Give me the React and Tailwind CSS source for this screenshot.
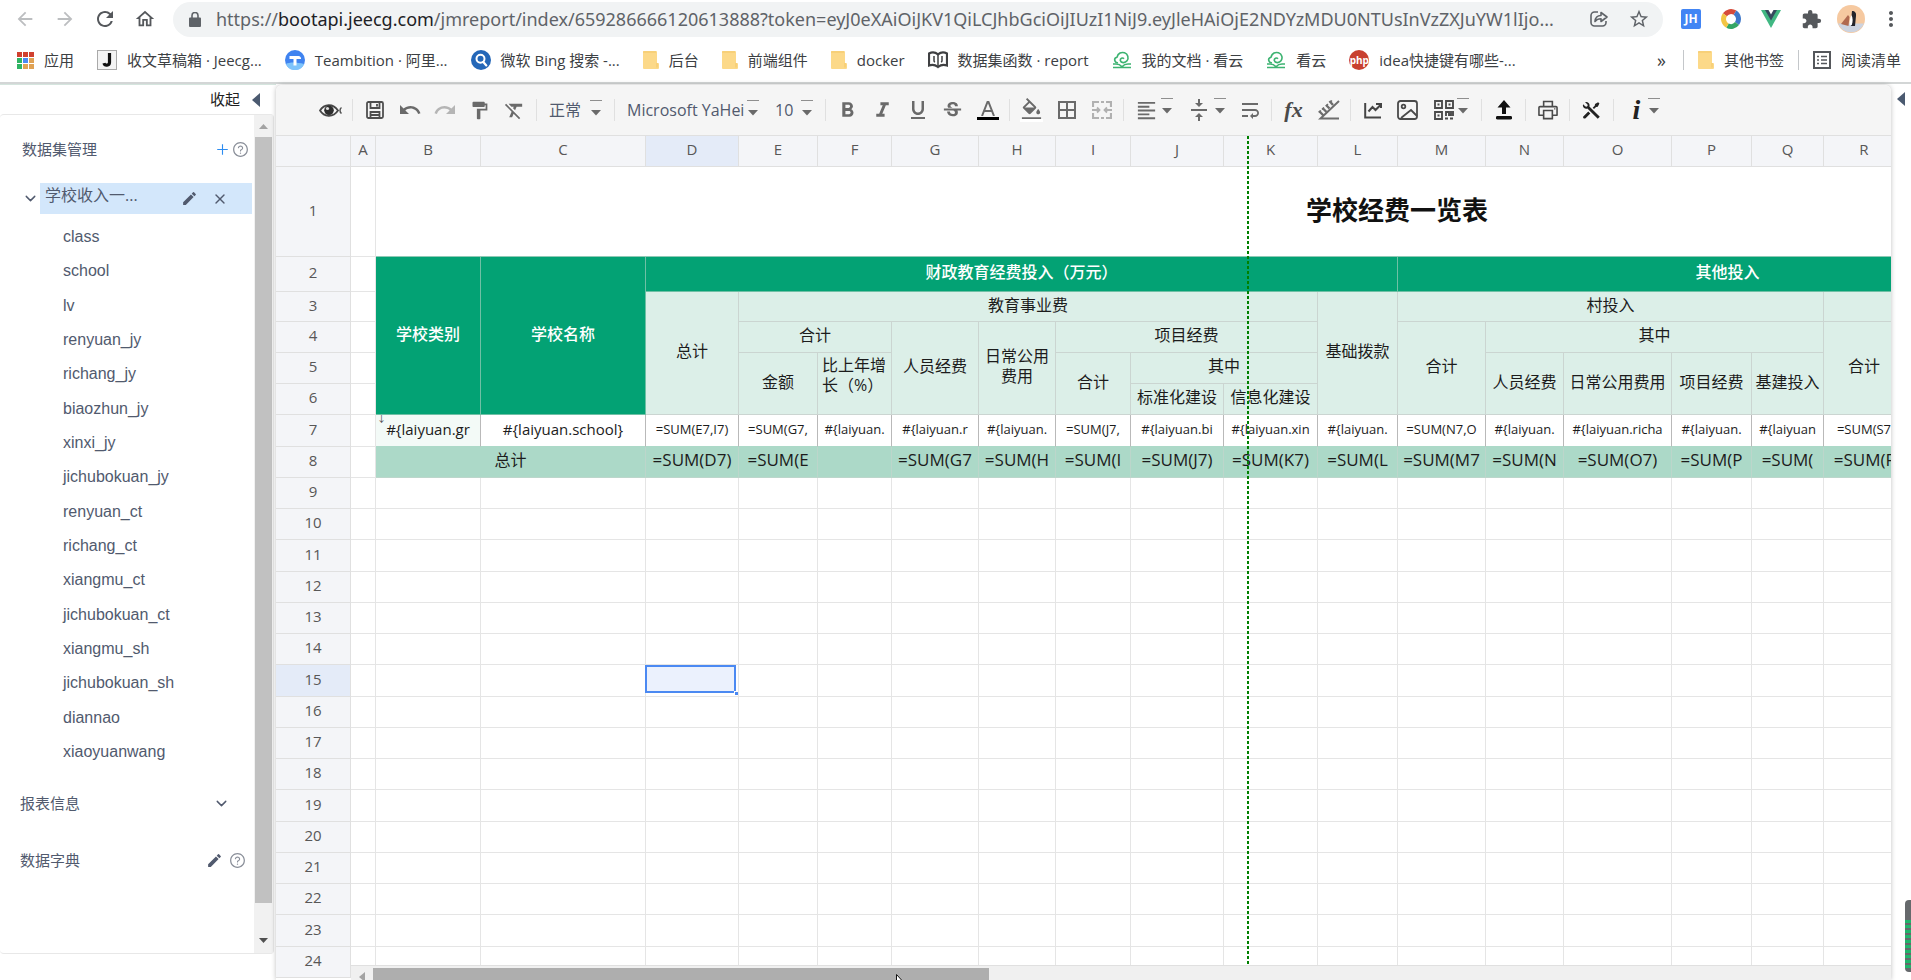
import { clsx } from 'clsx';
import { LuChevronDown, LuX } from 'react-icons/lu';
import {
  MdArrowBack, MdArrowForward, MdRefresh, MdOutlineHome, MdStarBorder, MdExtension, MdMoreVert, MdEdit,
  MdFormatBold, MdFormatItalic, MdFormatUnderlined, MdStrikethroughS, MdFormatColorFill, MdBorderAll,
  MdUndo, MdRedo, MdFormatPaint, MdFormatClear, MdFormatAlignLeft, MdVerticalAlignCenter, MdWrapText,
} from 'react-icons/md';
import { AiOutlineQuestionCircle, AiOutlinePlus, AiOutlinePrinter } from 'react-icons/ai';
import { RiToolsFill } from 'react-icons/ri';

/* ---------- small drawings ---------- */

const AppsIcon = () => (
  <svg viewBox="0 0 17 17" className="w-[17px] h-[17px]">
    {['#d0402f', '#d0402f', '#d0402f', '#2fb463', '#4a8af4', '#e0a254', '#2fb463', '#e0a254', '#e0a254'].map((c, i) => (
      <rect key={i} x={(i % 3) * 6} y={Math.floor(i / 3) * 6} width="5" height="5" fill={c} />
    ))}
  </svg>
);

const JIcon = () => (
  <svg viewBox="0 0 20 20" className="w-5 h-5">
    <rect x="0.5" y="0.5" width="19" height="19" fill="#f4f4f4" stroke="#a9a9a9" />
    <path d="M12.5 3v9.5a2.8 2.8 0 0 1-5.5.6" fill="none" stroke="#111" strokeWidth="3.2" />
  </svg>
);

const TeamIcon = () => (
  <svg viewBox="0 0 20 20" className="w-5 h-5">
    <circle cx="10" cy="10" r="10" fill="#3f83f0" />
    <path d="M0.800 14c4-2 10-2 18.400 0a10 10 0 0 1-18.400 0z" fill="#7fc4fb" />
    <path d="M4.500 6h9a2.500 2.500 0 0 1 2.500 3h-4.500v6.500h-3V9h-4z" fill="#fff" />
  </svg>
);

const BingIcon = () => (
  <svg viewBox="0 0 20 20" className="w-5 h-5">
    <circle cx="10" cy="10" r="10" fill="#2467b8" />
    <circle cx="9.500" cy="8.800" r="4" fill="none" stroke="#fff" strokeWidth="2" />
    <path d="M12.300 12l3 3.400" stroke="#fff" strokeWidth="2.200" strokeLinecap="round" />
  </svg>
);

const FolderIcon = () => (
  <svg viewBox="0 0 16 18" className="w-4 h-[18px]">
    <path d="M1 0h12a1 1 0 0 1 1 1v11h1a1 1 0 0 1 1 1v4a1 1 0 0 1-1 1H1a1 1 0 0 1-1-1V1a1 1 0 0 1 1-1z" fill="#fcd989" />
    <path d="M14 12v4.500M0 1h13" stroke="#f3c768" fill="none" />
  </svg>
);

const BookIcon = () => (
  <svg viewBox="0 0 20 18" className="w-5 h-[18px]" fill="none" stroke="#3f4042" strokeWidth="2.200">
    <path d="M1 2.500c3-1.500 6-1.500 9 .8 3-2.300 6-2.300 9-.8v12c-3-1.200-6-1-9 1.500-3-2.500-6-2.700-9-1.500z" />
    <path d="M10 4v11M6 5v4.500a1.500 1.500 0 0 0 1 1.500M14 5v4.500a1.500 1.500 0 0 1-1 1.500" strokeWidth="1.500" />
  </svg>
);

const CloudIcon = () => (
  <svg viewBox="0 0 20 18" className="w-5 h-[18px]" fill="none" stroke="#3cb371" strokeWidth="1.600">
    <path d="M6 12C2 11.500 1.500 7 5 6.200 6 2 9.500.8 12.500 1.800c3.500 1.200 4.500 5.200 2.500 8C13 12.500 9 12 8.300 9.500 8 7.500 10.500 6 12 7.800" />
    <path d="M1 13h3c3 0 4.500 1 6 2.700C11.500 14 13 13 16 13h3M1 16.500h18" />
  </svg>
);

const PhpIcon = () => (
  <span className="flex w-5 h-5 items-center justify-center rounded-full bg-[#c8402f] text-[10px] leading-5 font-bold text-white">
    php
  </span>
);

const ListIcon = () => (
  <svg viewBox="0 0 18 18" className="w-[18px] h-[18px]" fill="none" stroke="#55585c" strokeWidth="2">
    <rect x="1" y="1" width="16" height="16" />
    <path d="M4 5.500h2M8 5.500h6M4 9h2M8 9h6M4 12.500h2M8 12.500h6" strokeWidth="1.600" />
  </svg>
);

const LockIcon = () => (
  <svg viewBox="0 0 12 15" className="w-3 h-[15px] shrink-0" fill="#5f6368">
    <path d="M1 5.500h10a1 1 0 0 1 1 1V14a1 1 0 0 1-1 1H1a1 1 0 0 1-1-1V6.500a1 1 0 0 1 1-1z" />
    <path d="M3 6V3.500a3 3 0 0 1 6 0V6" fill="none" stroke="#5f6368" strokeWidth="1.600" />
  </svg>
);

const ShareIcon = () => (
  <svg viewBox="0 0 20 18" className="w-5 h-[18px]" fill="none" stroke="#5f6368" strokeWidth="1.600">
    <path d="M9 2H5.500A3.500 3.500 0 0 0 2 5.500v7A3.500 3.500 0 0 0 5.500 16h8a3.500 3.500 0 0 0 3.500-3.500V11" />
    <path d="M6 11.500c.3-4 2.500-6 6-6V2.500L18 7l-6 4.500V8.800c-2.500 0-4.500.8-6 2.700z" strokeLinejoin="round" />
  </svg>
);

const RingIcon = () => (
  <svg viewBox="0 0 20 20" className="w-5 h-5" fill="none" strokeWidth="5">
    <path d="M3.900 5.700A7.500 7.500 0 0 1 14 3.700" stroke="#d64b3a" />
    <path d="M14 3.700a7.500 7.500 0 0 1 2 10.800" stroke="#3f78c9" />
    <path d="M16 14.500a7.500 7.500 0 0 1-9.500 2.100" stroke="#33a566" />
    <path d="M6.500 16.600A7.500 7.500 0 0 1 3.900 5.700" stroke="#f2c544" />
  </svg>
);

const VueIcon = () => (
  <svg viewBox="0 0 20 18" className="w-5 h-[18px]">
    <path d="M0 0h20L10 18z" fill="#41b883" />
    <path d="M4 0h12l-6 10.500z" fill="#35495e" />
    <path d="M7.500 0h5L10 4.500z" fill="#fff" />
  </svg>
);

const Avatar = () => (
  <svg viewBox="0 0 28 28" className="w-7 h-7">
    <circle cx="14" cy="14" r="14" fill="#f6c9a0" />
    <path d="M1 18.500a14 14 0 0 0 26 0z" fill="#ccd3e0" />
    <path d="M4 19l7-9 1.500 2-1 9z" fill="#b0694f" />
    <path d="M15 6c3 0 4.500 2 4 5l-1 10h-4c1.500-3 1-7 .5-10z" fill="#23242b" />
    <path d="M14.500 10c1.500 3 1.500 7 .2 10h-2c-.3-4 .3-7 1.800-10z" fill="#fff" />
  </svg>
);

const EyeIcon = () => (
  <svg viewBox="0 0 23 15" className="w-[23px] h-[15px]">
    <path d="M1 7.500C5 1 14 0 19 7.500 14 15 5 14 1 7.500z" fill="none" stroke="#474747" strokeWidth="1.800" />
    <circle cx="10" cy="7.300" r="4.800" fill="#2e2e2e" />
    <circle cx="8.500" cy="5.500" r="1.600" fill="#ddd" />
    <path d="M22.500 4.500c-2 1.500-2 4.500 0 6" fill="none" stroke="#555" strokeWidth="1.500" />
  </svg>
);

const SaveIcon = () => (
  <svg viewBox="0 0 18 18" className="w-[18px] h-[18px]" fill="none" stroke="#4f4f4f" strokeWidth="1.800">
    <rect x="1" y="1" width="16" height="16" rx="1.500" />
    <path d="M4.500 1v6h9V1M4.500 17v-6h9v6M11 3v2.500M5 14h8" />
  </svg>
);

const MergeIcon = () => (
  <svg viewBox="0 0 20 18" className="w-5 h-[18px]" fill="none" stroke="#b1b1b1" strokeWidth="2.200">
    <path d="M1 6V1h6M9 1h3M14 1h5v5M1 12v5h6M9 17h3M14 17h5v-5" />
    <path d="M0 9h7M13 9h7M5 6.500L7.500 9 5 11.500M15 6.500L12.500 9l2.500 2.500" strokeWidth="1.800" />
  </svg>
);

const RulerIcon = () => (
  <svg viewBox="0 0 22 20" className="w-[22px] h-5" fill="none" stroke="#6d6d6d" strokeWidth="2">
    <path d="M21 1L2.500 18.500H21" />
    <path d="M1 11l4.500 4.500M4.500 8l4 4M8 5l3.500 3.500M11.500 1l3.500 4" strokeWidth="2.400" />
    <path d="M1 12.500l2-2M4 9.500l2-2M8 6l2-2M12 2.500l2-2" strokeWidth="1.400" />
  </svg>
);

const ChartIcon = () => (
  <svg viewBox="0 0 18 18" className="w-[18px] h-[18px]" fill="none" stroke="#454545" strokeWidth="2">
    <path d="M1.200 2v14.500H17" />
    <path d="M4.500 10.500L8.500 6l3 3 5-5M12 3h5v4" strokeWidth="2" />
  </svg>
);

const ImageIcon = () => (
  <svg viewBox="0 0 21 20" className="w-[21px] h-5" fill="none" stroke="#4a4a4a" strokeWidth="1.800">
    <rect x="1" y="1" width="19" height="18" rx="2.500" />
    <circle cx="6.500" cy="6.500" r="1.800" />
    <path d="M4 18l10-8 6 6" />
  </svg>
);

const QrIcon = () => (
  <svg viewBox="0 0 20 20" className="w-5 h-5" fill="none" stroke="#4a4a4a" strokeWidth="1.900">
    <path d="M1 1h7v7H1zM12 1h7v7h-7zM1 12h7v7H1z" />
    <path d="M3.500 4.500h2M14.500 4.500h2M3.500 15.500h2M12 16v-4h3v3h2v-4M19 11v5M11 18.500h3M16 18.500h3" />
  </svg>
);

const UploadIcon = () => (
  <svg viewBox="0 0 16 20" className="w-4 h-5" fill="#111">
    <path d="M8 0l6.500 7.500H10V14H6V7.500H1.500zM1.500 16h13a1.700 1.700 0 0 1 0 3.500h-13a1.700 1.700 0 0 1 0-3.500z" />
  </svg>
);

const ColorText = () => (
  <span className="flex flex-col items-center gap-px">
    <svg viewBox="0 0 14 15" className="w-3.5 h-[15px]" fill="none" stroke="#6a6a6a" strokeWidth="2">
      <path d="M1 15L6.500 1h1L13 15M3.500 10h7" />
    </svg>
    <span className="w-[22px] h-[3px] bg-black" />
  </span>
);

/* ---------- browser header ---------- */

const BOOKMARKS = [
  { icon: <JIcon />, label: '收文草稿箱 · Jeecg...' },
  { icon: <TeamIcon />, label: 'Teambition · 阿里...' },
  { icon: <BingIcon />, label: '微软 Bing 搜索 -...' },
  { icon: <FolderIcon />, label: '后台' },
  { icon: <FolderIcon />, label: '前端组件' },
  { icon: <FolderIcon />, label: 'docker' },
  { icon: <BookIcon />, label: '数据集函数 · report' },
  { icon: <CloudIcon />, label: '我的文档 · 看云' },
  { icon: <CloudIcon />, label: '看云' },
  { icon: <PhpIcon />, label: 'idea快捷键有哪些-...' },
];

function Bookmark({ icon, label }) {
  return (
    <a href="#" className="flex items-center gap-2.5 whitespace-nowrap">
      {icon}
      {label}
    </a>
  );
}

function NavButton({ label, children, className }) {
  return (
    <button aria-label={label} className={clsx('flex w-10 h-9 shrink-0 items-center justify-center', className)}>
      {children}
    </button>
  );
}

function BrowserBar() {
  return (
    <header className="border-b-2 border-[#d3d6d6] bg-white text-[#3c4043]">
      <div className="flex h-[38px] items-center pl-[5px]">
        <NavButton label="后退" className="text-[#bcbec0]"><MdArrowBack size={22} /></NavButton>
        <NavButton label="前进" className="text-[#bcbec0]"><MdArrowForward size={22} /></NavButton>
        <NavButton label="刷新" className="text-[#55585c]"><MdRefresh size={24} /></NavButton>
        <NavButton label="主页" className="text-[#55585c]"><MdOutlineHome size={22} /></NavButton>
        <div className="ml-2 flex h-[35px] min-w-0 flex-1 items-center rounded-full bg-[#f1f3f4] pl-4 pr-1 text-[#5f6368]">
          <LockIcon />
          <div className="ml-[15px] min-w-0 flex-1 font-['Noto_Sans',sans-serif] text-[18px] leading-6 whitespace-nowrap">
            https://<span className="text-[#202124]">bootapi.jeecg.com</span>
            /jmreport/index/659286666120613888?token=eyJ0eXAiOiJKV1QiLCJhbGciOiJIUzI1NiJ9.eyJleHAiOjE2NDYzMDU0NTUsInVzZXJuYW1lIjo...
          </div>
          <NavButton label="分享"><ShareIcon /></NavButton>
          <NavButton label="收藏"><MdStarBorder size={22} /></NavButton>
        </div>
        <div className="ml-2 flex items-center">
          <NavButton label="JH">
            <span className="flex w-5 h-5 items-center justify-center rounded-xs bg-[#4285f4] text-[12px] leading-5 font-bold text-white">JH</span>
          </NavButton>
          <NavButton label="扩展"><RingIcon /></NavButton>
          <NavButton label="Vue"><VueIcon /></NavButton>
          <NavButton label="扩展程序" className="text-[#55585c]"><MdExtension size={21} /></NavButton>
          <NavButton label="用户"><Avatar /></NavButton>
          <NavButton label="更多" className="text-[#55585c]"><MdMoreVert size={24} /></NavButton>
        </div>
      </div>
      <nav className="flex h-11 items-center gap-[23px] pl-[17px] pr-2.5 text-[15px] leading-5">
        <Bookmark icon={<AppsIcon />} label="应用" />
        {BOOKMARKS.map((b) => <Bookmark key={b.label} {...b} />)}
        <span className="ml-auto text-[18px]">»</span>
        <div className="-ml-1.5 flex items-center gap-3.5">
          <span className="w-px h-5 bg-[#c4c7ca]" />
          <Bookmark icon={<FolderIcon />} label="其他书签" />
          <span className="w-px h-5 bg-[#c4c7ca]" />
          <Bookmark icon={<ListIcon />} label="阅读清单" />
        </div>
      </nav>
    </header>
  );
}

/* ---------- sidebar ---------- */

const FIELDS = [
  'class', 'school', 'lv', 'renyuan_jy', 'richang_jy', 'biaozhun_jy', 'xinxi_jy', 'jichubokuan_jy',
  'renyuan_ct', 'richang_ct', 'xiangmu_ct', 'jichubokuan_ct', 'xiangmu_sh', 'jichubokuan_sh', 'diannao', 'xiaoyuanwang',
];

function Sidebar() {
  return (
    <aside className="flex w-[276px] shrink-0 flex-col border-t border-[#d5e5de] bg-white text-[#515a6e]">
      <button className="flex h-[29px] items-center justify-end gap-3 pr-4 text-[15px] text-[#222]">
        收起
        <svg viewBox="0 0 8 14" className="w-2 h-3.5" fill="#4b5a70"><path d="M8 0v14L0 7z" /></svg>
      </button>
      <div className="flex h-[840px] w-[274px] rounded-sm border border-l-0 border-[#e8e8e8]">
        <div className="min-w-0 flex-1">
          <div className="flex h-[68px] items-center pl-[22px] pr-[5px] text-[15px]">
            <span className="flex-1">数据集管理</span>
            <button aria-label="新增" className="text-[#2d8cf0]"><AiOutlinePlus size={15} /></button>
            <button aria-label="帮助" className="ml-0.5 text-[#8a8f99]"><AiOutlineQuestionCircle size={17} /></button>
          </div>
          <div className="flex h-[31px] pr-0.5">
            <button aria-label="展开" className="flex w-10 items-center justify-end pr-px"><LuChevronDown size={17} /></button>
            <div className="flex flex-1 items-center bg-[#d3e7fb] pl-[5px]">
              <span className="flex-1 pb-2 text-[16px] leading-5 whitespace-nowrap">学校收入一...</span>
              <button aria-label="编辑" className="mr-3.5"><MdEdit size={17} /></button>
              <button aria-label="删除" className="mr-6"><LuX size={16} /></button>
            </div>
          </div>
          <ul className="mt-1.5 flex h-[549px] flex-col font-['Liberation_Sans',sans-serif] text-[16px]">
            {FIELDS.map((f) => (
              <li key={f} className="flex flex-1 items-center pl-[63px]">{f}</li>
            ))}
          </ul>
          <div className="mt-1.5 flex h-14 items-center pl-5 pr-6 text-[15px]">
            <span className="flex-1">报表信息</span>
            <button aria-label="展开报表信息"><LuChevronDown size={17} /></button>
          </div>
          <div className="flex h-[58px] items-center pl-5 pr-2 text-[15px]">
            <span className="flex-1">数据字典</span>
            <button aria-label="编辑字典" className="mr-1.5"><MdEdit size={17} /></button>
            <button aria-label="字典帮助" className="text-[#8a8f99]"><AiOutlineQuestionCircle size={17} /></button>
          </div>
        </div>
        <div className="flex w-[19px] flex-col items-center bg-[#f1f1f1]">
          <svg viewBox="0 0 9 5" className="mt-[9px] mb-2 w-[9px] h-[5px]" fill="#a3a3a3"><path d="M0 5l4.500-5L9 5z" /></svg>
          <div className="h-[766px] w-[17px] bg-[#c1c1c1]" />
          <svg viewBox="0 0 9 5" className="mt-auto mb-2.5 w-[9px] h-[5px]" fill="#505050"><path d="M0 0h9L4.500 5z" /></svg>
        </div>
      </div>
    </aside>
  );
}

/* ---------- toolbar ---------- */

const Caret = () => (
  <svg viewBox="0 0 12 18" className="w-3 h-[18px]" fill="#6a6a6a">
    <path d="M0 0h12v1H0z" fill="#8f8f8f" />
    <path d="M1 10h10l-5 5.500z" />
  </svg>
);

const Sep = () => <span className="mx-1 h-[22px] w-px shrink-0 bg-[#e0e0e0]" />;

function Tool({ label, wide, children }) {
  return (
    <button
      aria-label={label}
      className={clsx('flex h-8 shrink-0 items-center justify-center text-[#6a6a6a]', wide ? 'w-13 gap-[3px]' : 'w-[35px]')}
    >
      {children}
      {wide && <span className="pb-1.5"><Caret /></span>}
    </button>
  );
}

function ToolSelect({ label, value, className }) {
  return (
    <label className={clsx('relative flex h-8 shrink-0 items-center', className)}>
      <select aria-label={label} className="w-full appearance-none bg-transparent pl-2 text-[16px] leading-6 text-[#515a6e]">
        <option>{value}</option>
      </select>
      <span className="pointer-events-none absolute right-2 top-1.5"><Caret /></span>
    </label>
  );
}

function Toolbar() {
  return (
    <div className="flex h-[51px] items-center overflow-hidden border-b border-[#e0e0e0] bg-[#f5f5f5] pl-[37px]">
      <Tool label="预览"><EyeIcon /></Tool>
      <Sep />
      <Tool label="保存"><SaveIcon /></Tool>
      <Tool label="撤销"><MdUndo size={24} /></Tool>
      <Tool label="重做"><MdRedo size={24} className="text-[#b5b5b5]" /></Tool>
      <Tool label="格式刷"><MdFormatPaint size={21} /></Tool>
      <Tool label="清除格式"><MdFormatClear size={23} /></Tool>
      <Sep />
      <ToolSelect label="格式" value="正常" className="w-[69px]" />
      <Sep />
      <ToolSelect label="字体" value="Microsoft YaHei" className="w-[148px]" />
      <ToolSelect label="字号" value="10" className="w-[54px]" />
      <Sep />
      <Tool label="加粗"><MdFormatBold size={25} /></Tool>
      <Tool label="斜体"><MdFormatItalic size={25} /></Tool>
      <Tool label="下划线"><MdFormatUnderlined size={24} /></Tool>
      <Tool label="删除线"><MdStrikethroughS size={23} /></Tool>
      <Tool label="文字颜色"><ColorText /></Tool>
      <Sep />
      <Tool label="填充">
        <span className="flex h-6 items-start overflow-hidden border-b-3 border-white"><MdFormatColorFill size={23} /></span>
      </Tool>
      <Tool label="边框"><MdBorderAll size={24} /></Tool>
      <Tool label="合并"><MergeIcon /></Tool>
      <Sep />
      <Tool label="对齐" wide><MdFormatAlignLeft size={23} /></Tool>
      <Tool label="垂直对齐" wide><MdVerticalAlignCenter size={24} /></Tool>
      <Tool label="换行"><MdWrapText size={24} /></Tool>
      <Sep />
      <Tool label="函数"><span className="font-['Liberation_Serif',serif] text-[22px] leading-8 font-bold italic text-[#4a4a4a]">fx</span></Tool>
      <Tool label="标尺"><RulerIcon /></Tool>
      <Sep />
      <Tool label="图表"><ChartIcon /></Tool>
      <Tool label="图片"><ImageIcon /></Tool>
      <Tool label="二维码" wide><QrIcon /></Tool>
      <Sep />
      <Tool label="导入"><UploadIcon /></Tool>
      <Sep />
      <Tool label="打印"><AiOutlinePrinter size={24} className="text-[#4a4a4a]" /></Tool>
      <Sep />
      <Tool label="工具"><RiToolsFill size={23} className="text-[#222]" /></Tool>
      <Sep />
      <Tool label="信息" wide><span className="w-4 font-['Liberation_Serif',serif] text-[28px] leading-8 font-bold italic text-[#222]">i</span></Tool>
    </div>
  );
}

/* ---------- sheet ---------- */

const COLUMNS = [
  ['A', 'w-[25px]'], ['B', 'w-[105px]'], ['C', 'w-[165px]'], ['D', 'w-[93px]'], ['E', 'w-[79px]'], ['F', 'w-[74px]'],
  ['G', 'w-[87px]'], ['H', 'w-[77px]'], ['I', 'w-[75px]'], ['J', 'w-[93px]'], ['K', 'w-[94px]'], ['L', 'w-[80px]'],
  ['M', 'w-[88px]'], ['N', 'w-[78px]'], ['O', 'w-[108px]'], ['P', 'w-[80px]'], ['Q', 'w-[72px]'], ['R', 'w-[81px]'],
];

const ROW7 = [
  '#{laiyuan.gr', '#{laiyuan.school}', '=SUM(E7,I7)', '=SUM(G7,', '#{laiyuan.', '#{laiyuan.r', '#{laiyuan.', '=SUM(J7,',
  '#{laiyuan.bi', '#{laiyuan.xin', '#{laiyuan.', '=SUM(N7,O', '#{laiyuan.', '#{laiyuan.richa', '#{laiyuan.', '#{laiyuan', '=SUM(S7',
];
const ROW8 = [
  '=SUM(D7)', '=SUM(E', '', '=SUM(G7', '=SUM(H', '=SUM(I', '=SUM(J7)', '=SUM(K7)', '=SUM(L', '=SUM(M7',
  '=SUM(N', '=SUM(O7)', '=SUM(P', '=SUM(', '=SUM(F',
];
const EMPTY_ROWS = [9, 10, 11, 12, 13, 14, 15, 16, 17, 18, 19, 20, 21, 22, 23, 24];

function RowHead({ n, active }) {
  return (
    <th scope="row" className={clsx('border-r border-b border-[#e0e0e0] p-0 pb-1 font-normal text-[#585757]', active ? 'bg-[#e4ebf8]' : 'bg-[#f4f5f8]')}>
      {n}
    </th>
  );
}

const Blank = ({ span = 1 }) => <td colSpan={span} className="border-r border-b border-[#e5e5e5] p-0" />;

function Head({ cols = 1, rows = 1, dark, children }) {
  return (
    <td
      colSpan={cols}
      rowSpan={rows}
      className={clsx(
        'overflow-hidden border-r border-b p-0 pb-1 text-[16px] leading-5 whitespace-nowrap',
        dark ? 'border-[#6fc0a5] bg-[#03a274] font-medium text-white' : 'border-[#cbd5d1] bg-[#dcefe8]',
      )}
    >
      {children}
    </td>
  );
}

function Sheet() {
  return (
    <table className="w-px table-fixed border-separate border-spacing-0 text-center text-[15px] leading-5 text-[#1c1c1c]">
      <colgroup>
        <col className="w-[75px]" />
        {COLUMNS.map(([name, width]) => <col key={name} className={width} />)}
        <col className="w-[153px]" />
        <col className="w-[360px]" />
      </colgroup>
      <thead>
        <tr className="h-[31px] bg-[#f4f5f8] text-[#585757]">
          <th className="border-r border-b border-[#e0e0e0] p-0" />
          {COLUMNS.map(([name]) => (
            <th key={name} scope="col" className={clsx('border-r border-b border-[#e0e0e0] p-0 pb-1 font-normal', name === 'D' && 'bg-[#e4ebf8]')}>
              {name}
            </th>
          ))}
          <th colSpan={2} className="border-b border-[#e0e0e0] p-0" />
        </tr>
      </thead>
      <tbody>
        <tr className="h-[90px]">
          <RowHead n={1} />
          <Blank />
          <td colSpan={19} className="border-b border-[#8fc9b5] p-0 pb-1 text-[26px] leading-8 font-bold text-[#111]">学校经费一览表</td>
        </tr>
        <tr className="h-[35px]">
          <RowHead n={2} />
          <Blank />
          <Head dark rows={5}>学校类别</Head>
          <Head dark rows={5}>学校名称</Head>
          <Head dark cols={9}>财政教育经费投入（万元）</Head>
          <Head dark cols={7}>其他投入</Head>
          <Blank />
        </tr>
        <tr className="h-[30px]">
          <RowHead n={3} />
          <Blank />
          <Head rows={4}>总计</Head>
          <Head cols={7}>教育事业费</Head>
          <Head rows={4}>基础拨款</Head>
          <Head cols={5}>村投入</Head>
          <Head cols={2} />
          <Blank />
        </tr>
        <tr className="h-[31px]">
          <RowHead n={4} />
          <Blank />
          <Head cols={2}>合计</Head>
          <Head rows={3}>人员经费</Head>
          <Head rows={3}>日常公用<br />费用</Head>
          <Head cols={3}>项目经费</Head>
          <Head rows={3}>合计</Head>
          <Head cols={4}>其中</Head>
          <Head rows={3}>合计</Head>
          <Head rows={3} />
          <Blank />
        </tr>
        <tr className="h-[31px]">
          <RowHead n={5} />
          <Blank />
          <Head rows={2}>金额</Head>
          <Head rows={2}><span className="block pb-3.5 text-left pl-1">比上年增<br />长（%）</span></Head>
          <Head rows={2}>合计</Head>
          <Head cols={2}>其中</Head>
          <Head rows={2}>人员经费</Head>
          <Head rows={2}>日常公用费用</Head>
          <Head rows={2}>项目经费</Head>
          <Head rows={2}>基建投入</Head>
          <Blank />
        </tr>
        <tr className="h-[31px]">
          <RowHead n={6} />
          <Blank />
          <Head>标准化建设</Head>
          <Head>信息化建设</Head>
          <Blank />
        </tr>
        <tr className="h-8">
          <RowHead n={7} />
          <Blank />
          {ROW7.map((text, i) => (
            <td
              key={i}
              className={clsx(
                'relative overflow-hidden border-r border-b border-r-[#b9b9b9] border-b-[#acd9c8] p-0 pb-1 whitespace-nowrap',
                i < 2 ? 'text-[15px]' : 'text-[13px]',
                i === 0 && 'bg-[#f3faf7]',
              )}
            >
              {i === 0 && <span className="absolute top-0 left-px text-[9px] leading-2 text-[#444]">↓</span>}
              {text}
            </td>
          ))}
          <Blank span={2} />
        </tr>
        <tr className="h-[31px] bg-[#acd9c8]">
          <RowHead n={8} />
          <td className="border-r border-b border-[#e5e5e5] bg-white p-0" />
          <td colSpan={2} className="border-r border-b border-[#bcd6cb] p-0 pb-1 text-[16px]">总计</td>
          {ROW8.map((text, i) => (
            <td key={i} className="overflow-hidden border-r border-b border-[#bcd6cb] p-0 pb-1 text-[17px] whitespace-nowrap">{text}</td>
          ))}
          <Blank span={2} />
        </tr>
        {EMPTY_ROWS.map((n) => (
          <tr key={n} className={n % 4 === 3 ? 'h-8' : 'h-[31px]'}>
            <RowHead n={n} active={n === 15} />
            {COLUMNS.map(([name]) => (
              <td key={name} className="relative border-r border-b border-[#e5e5e5] p-0">
                {n === 15 && name === 'D' && (
                  <div className="absolute top-0 -left-px h-7 w-[91px] border-2 border-[#4b89f2] bg-[#ebf1fd]">
                    <span className="absolute -right-1 -bottom-1 h-1 w-1 border-t border-l border-white bg-[#4b89f2]" />
                  </div>
                )}
              </td>
            ))}
            <Blank span={2} />
          </tr>
        ))}
      </tbody>
    </table>
  );
}

function Workspace() {
  return (
    <main className="relative mt-px flex min-w-0 flex-1 flex-col overflow-hidden rounded-t-md bg-white shadow-[0_0_5px_rgba(0,0,0,0.25)]">
      <Toolbar />
      <div className="relative min-h-0 flex-1 overflow-hidden">
        <Sheet />
        {/* print page boundary */}
        <div className="absolute top-0 bottom-3.5 left-[971px] w-0.5 bg-[repeating-linear-gradient(to_bottom,#008000_0,#008000_3px,transparent_3px,transparent_5px)]" />
        {/* horizontal scrollbar */}
        <div className="absolute right-0 bottom-0 left-[75px] flex h-[15px] border-t border-[#e0e0e0] bg-[#f0f0f0]">
          <svg viewBox="0 0 6 10" className="mt-1.5 ml-2 mr-2 w-1.5 h-2.5" fill="#a3a3a3"><path d="M6 0v10L0 5z" /></svg>
          <div className="mt-0.5 w-[40%] bg-[#aeaeae]" />
        </div>
        <svg viewBox="0 0 12 6" className="absolute bottom-0 left-[620px] h-1.5 w-3">
          <path d="M0.500 0.500v15l4-4h6z" fill="#fff" stroke="#111" />
        </svg>
      </div>
    </main>
  );
}

export default function App() {
  return (
    <div className="flex h-screen flex-col overflow-hidden bg-white font-['Open_Sans','Noto_Sans_CJK_SC',sans-serif]">
      <BrowserBar />
      <div className="relative flex min-h-0 flex-1">
        <Sidebar />
        <Workspace />
        <div className="flex w-5 shrink-0 justify-center pt-2">
          <button aria-label="展开右侧" className="flex h-3.5 w-2">
            <svg viewBox="0 0 8 14" className="w-2 h-3.5" fill="#4b5a70"><path d="M8 0v14L0 7z" /></svg>
          </button>
        </div>
        <div className="absolute right-0 bottom-2 h-[72px] w-1.5 rounded-l-sm bg-[#66696c] pt-5 pb-1">
          <div className="h-full bg-[repeating-linear-gradient(to_bottom,#22b46c_0,#22b46c_3px,#66696c_3px,#66696c_5px)]" />
        </div>
      </div>
    </div>
  );
}
